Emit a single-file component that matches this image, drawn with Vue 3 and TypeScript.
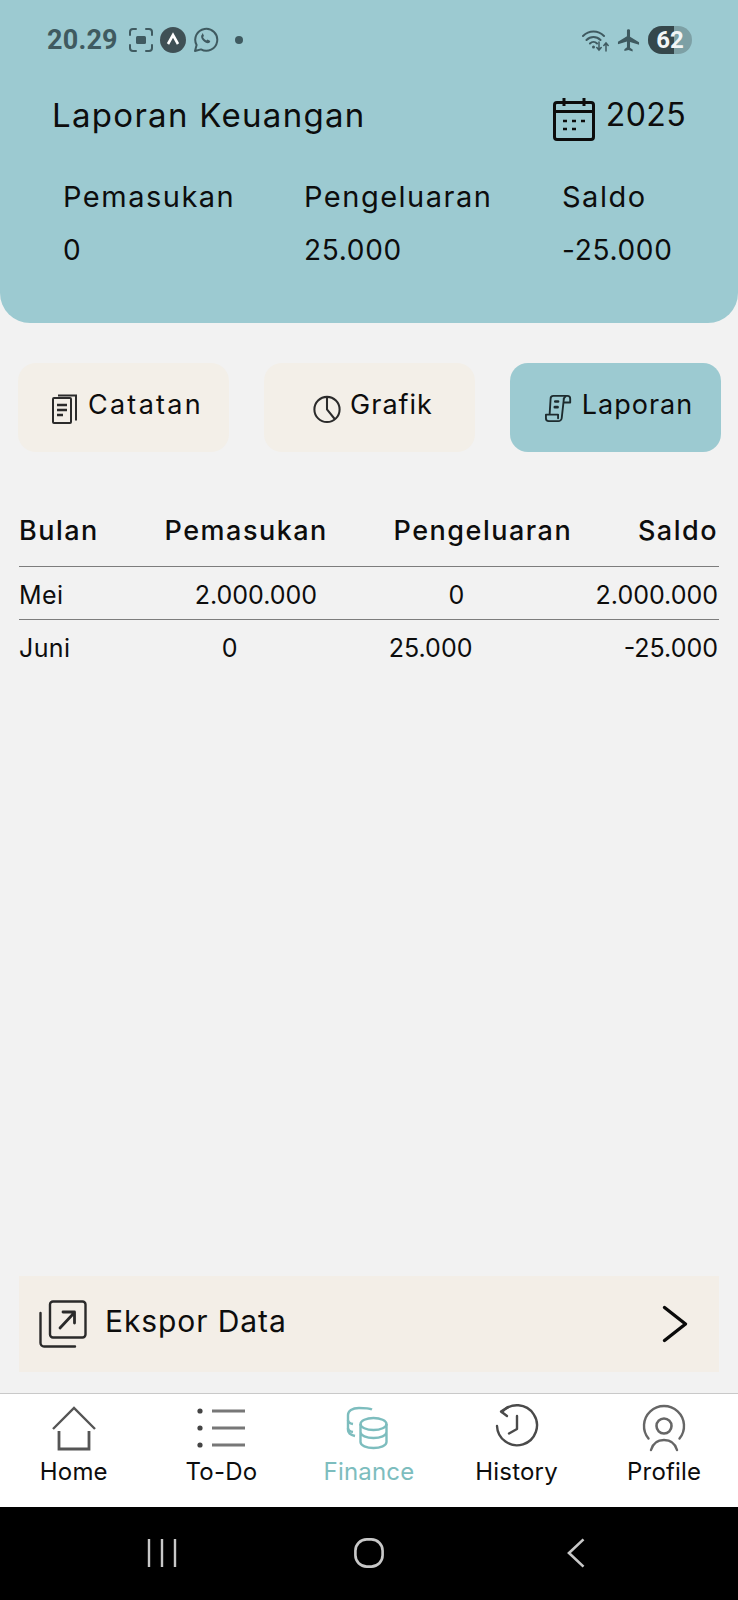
<template>
  <div class="page">
    <header class="hero">
      <div class="status">
        <span class="time">20.29</span>
        <svg class="st-shot" viewBox="0 0 24 24" fill="none" stroke="#3f5a60" stroke-width="2" stroke-linecap="round">
          <path d="M1 7V4a3 3 0 0 1 3-3h3M17 1h3a3 3 0 0 1 3 3v3M23 17v3a3 3 0 0 1-3 3h-3M7 23H4a3 3 0 0 1-3-3v-3" />
          <rect x="7" y="8" width="10" height="8" rx="1.500" fill="#3f5a60" stroke="none" />
        </svg>
        <svg class="st-a" viewBox="0 0 26 26">
          <circle cx="13" cy="13" r="13" fill="#3f5055" />
          <path d="M8 17l5-9 5 9" fill="none" stroke="#fff" stroke-width="2.600" />
        </svg>
        <svg class="st-wa" viewBox="0 0 26 26" fill="none" stroke="#3f5a60" stroke-width="2">
          <path d="M2 24l1.600-6A11 11 0 1 1 8 22.400z" stroke-linejoin="round" />
          <path d="M9 7.500c-1.600 1.400-1 4 1.200 6.300s5 3.200 6.500 1.600l.6-1.400-2.800-1.600-1.200 1c-1.400-.5-2.700-1.800-3.300-3.300l1-1.200-1.300-2.800z" fill="#3f5a60" stroke="none" />
        </svg>
        <span class="st-dot"></span>
        <span class="st-gap"></span>
        <svg class="st-wifi" viewBox="0 0 28 24" fill="none" stroke="#3f5a60" stroke-width="2" stroke-linecap="round">
          <path d="M1 8c6-6 15-6 21 0M4.500 12c4-4 10-4 14 0M8 15.500c2-2 5-2 7 0" />
          <circle cx="11.500" cy="19" r="1.500" fill="#3f5a60" stroke="none" />
          <path d="M17 14v8M14.800 19.500l2.200 2.500 2.200-2.500M24 23v-8M21.800 17.500l2.200-2.500 2.200 2.500" stroke-width="1.500" />
        </svg>
        <svg class="st-plane" viewBox="0 0 24 24">
          <path d="M10.400 1.500c0-1.600 3.200-1.600 3.200 0v6.600l9.400 5.700v2.700l-9.400-3v6l2.700 2v1.900L12 21.900l-4.300 1.100V21l2.700-2v-6l-9.400 3v-2.700l9.400-5.700z" fill="#3f5a60" />
        </svg>
        <div class="battery"><span class="bat-level"></span><span class="bat-num">62</span></div>
      </div>

      <div class="title-row">
        <h1 class="title">Laporan Keuangan</h1>
        <div class="year">
          <svg class="cal" viewBox="0 0 42 44" fill="none" stroke="#0c0c0c" stroke-width="3">
            <rect x="1.500" y="5.500" width="39" height="37" rx="2.500" />
            <path d="M1.500 14.500h39M11 1v8M31 1v8" />
            <path d="M10 24h4M19 24h4M28 24h4M10 32h4M19 32h4" stroke-width="2.500" />
          </svg>
          <span>2025</span>
        </div>
      </div>

      <div class="summary">
        <span class="lbl">Pemasukan</span>
        <span class="lbl">Pengeluaran</span>
        <span class="lbl">Saldo</span>
        <span>0</span>
        <span>25.000</span>
        <span>-25.000</span>
      </div>
    </header>

    <nav class="tabs">
      <button type="button" class="tab wide">
        <svg class="tab-ico" viewBox="0 0 26 30" fill="none" stroke="#2b2b2b" stroke-width="2">
          <rect x="1" y="4" width="18" height="25" rx="1" />
          <path d="M6 1.500h18v25" />
          <path d="M5 11h10M5 16h10M5 21h6" stroke-width="2.400" />
        </svg>
        Catatan
      </button>
      <button type="button" class="tab">
        <svg class="tab-ico" viewBox="0 0 30 30" fill="none" stroke="#2b2b2b" stroke-width="2.200">
          <circle cx="15" cy="15.500" r="13.500" />
          <path d="M15 2v13.500l8.500 10.500" />
        </svg>
        Grafik
      </button>
      <button type="button" class="tab active">
        <svg class="tab-ico" viewBox="0 0 30 30" fill="none" stroke="#1d2b2e" stroke-width="2" stroke-linejoin="round" stroke-linecap="round">
          <path d="M5 20L6 4a3 3 0 0 1 3-3h15a3 3 0 0 1 3 3v4h-6" />
          <path d="M22 1.500c-1.500 1-2 2.500-2 4.500l-2 18a4 4 0 0 1-4 4H4a3 3 0 0 1-3-3v-4h13v4" />
          <path d="M11 7h3M10.500 13h3" stroke-width="2.800" />
        </svg>
        Laporan
      </button>
    </nav>

    <section class="table">
      <div class="row head">
        <span>Bulan</span>
        <span>Pemasukan</span>
        <span>Pengeluaran</span>
        <span>Saldo</span>
      </div>
      <div v-for="r in rows" :key="r[0]" class="row">
        <span v-for="(c, i) in r" :key="i">{{ c }}</span>
      </div>
    </section>

    <div class="spacer"></div>

    <div class="export">
      <svg class="exp-ico" viewBox="0 0 48 48" fill="none" stroke="#2a2a2a" stroke-width="2.400" stroke-linecap="round" stroke-linejoin="round">
        <rect x="11" y="1.500" width="35.500" height="36" rx="3" />
        <path d="M1.500 13v30a3.500 3.500 0 0 0 3.500 3.500h31" />
        <path d="M21 28l14-15M24 12h11.500v11" stroke-width="2.800" />
      </svg>
      <span class="exp-label">Ekspor Data</span>
      <svg class="exp-chev" viewBox="0 0 26 38" fill="none" stroke="#0a0a0a" stroke-width="3.400" stroke-linecap="round" stroke-linejoin="round">
        <path d="M2.500 2.500L23.500 19 2.500 35.500" />
      </svg>
    </div>

    <nav class="bottom">
      <div v-for="n in navItems" :key="n" class="nav-item" :class="{ on: n === 'Finance' }">
        <svg v-if="n === 'Home'" viewBox="0 0 44 44" fill="none" stroke="#555" stroke-width="2.400">
          <path d="M1 23L22 2l21 21" />
          <path d="M7 25v18h30V25" stroke-width="2.800" />
        </svg>
        <svg v-else-if="n === 'To-Do'" viewBox="0 0 50 44" fill="none" stroke="#777" stroke-width="3.200">
          <path d="M16 5h33M16 22h33M16 39h33" />
          <circle cx="4" cy="5" r="2.600" fill="#444" stroke="none" />
          <circle cx="4" cy="22" r="2.600" fill="#444" stroke="none" />
          <circle cx="4" cy="39" r="2.600" fill="#444" stroke="none" />
        </svg>
        <svg v-else-if="n === 'Finance'" viewBox="0 0 44 44" fill="none" stroke="#7dbdbe" stroke-width="2.400">
          <path d="M25 3.500C22 2 18 2 12 2 5 2 1 5 1 9v15c0 3 3 5 7 6" />
          <path d="M1 14c0 2 2 3.500 5 4M1 22c0 2 2 3.500 5 4" />
          <ellipse cx="26.500" cy="18" rx="13" ry="6" />
          <path d="M13.500 18v18c0 3.500 6 6 13 6s13-2.500 13-6V18M13.500 26c0 3.500 6 6 13 6s13-2.500 13-6" />
        </svg>
        <svg v-else-if="n === 'History'" viewBox="0 0 44 44" fill="none" stroke="#4a4a4a" stroke-width="2.400" stroke-linecap="round" stroke-linejoin="round">
          <path d="M7 6A20 20 0 1 1 2 20" />
          <path d="M13 1L6 5.500 12 10" />
          <path d="M22 10v13l-8 4.500" />
        </svg>
        <svg v-else viewBox="0 0 44 44" fill="none" stroke="#666" stroke-width="2.400" stroke-linecap="round">
          <path d="M6.500 32.600A20 20 0 1 1 37.500 32.600" />
          <circle cx="22" cy="20" r="7.500" stroke-width="2.600" />
          <path d="M9 44c2-7 7-10 13-10s11 3 13 10" />
        </svg>
        <span>{{ n }}</span>
      </div>
    </nav>

    <div class="sysbar">
      <svg viewBox="0 0 30 30" fill="none" stroke="#c8c8c8" stroke-width="2.400"><path d="M2 1v28M15 1v28M28 1v28" /></svg>
      <svg viewBox="0 0 32 32" fill="none" stroke="#c8c8c8" stroke-width="2.800"><rect x="1.500" y="1.500" width="29" height="29" rx="12" /></svg>
      <svg viewBox="0 0 20 32" fill="none" stroke="#c8c8c8" stroke-width="2.800"><path d="M18 1.500L2.500 16 18 30.500" /></svg>
    </div>
  </div>
</template>

<script setup lang="ts">
const rows: string[][] = [
  ['Mei', '2.000.000', '0', '2.000.000'],
  ['Juni', '0', '25.000', '-25.000'],
];
const navItems = ['Home', 'To-Do', 'Finance', 'History', 'Profile'];
</script>

<style>
html, body { margin: 0; background: #f2f2f2; }
</style>

<style scoped>
.page {
  width: 738px;
  height: 1600px;
  display: flex;
  flex-direction: column;
  background: #f2f2f2;
  color: #0d0d0d;
  font-family: Inter, "Noto Sans", sans-serif;
  overflow: hidden;
}

.hero {
  height: 323px;
  box-sizing: border-box;
  padding-top: 26px;
  background: #9ccad1;
  border-radius: 0 0 30px 30px;
}

.status {
  height: 28px;
  display: flex;
  align-items: center;
  padding: 0 46px 0 47px;
}
.time {
  font: 700 27px/28px Roboto, sans-serif;
  letter-spacing: 0.2px;
  color: #3f5a60;
  width: 70px;
}
.st-shot { width: 24px; height: 24px; margin-left: 12px; }
.st-a { width: 26px; height: 26px; margin-left: 7px; }
.st-wa { width: 26px; height: 26px; margin-left: 7px; }
.st-dot { width: 8px; height: 8px; border-radius: 50%; background: #3f5a60; margin-left: 16px; }
.st-gap { flex: 1; }
.st-wifi { width: 28px; height: 24px; }
.st-plane { width: 23px; height: 23px; margin-left: 7px; }
.battery {
  position: relative;
  width: 44px;
  height: 28px;
  margin-left: 8px;
  border-radius: 14px;
  overflow: hidden;
  background: #7da0a5;
  text-align: center;
  font: 700 24px/28px Roboto, sans-serif;
  color: #f2f6f6;
}
.bat-level { position: absolute; left: 0; top: 0; bottom: 0; width: 26px; background: #35474b; }
.bat-num { position: relative; }

.title-row {
  height: 44px;
  margin-top: 40px;
  display: flex;
  align-items: center;
  justify-content: space-between;
  padding: 0 52px 0 52px;
}
.title {
  margin: 0;
  padding-bottom: 2px;
  font-size: 33px;
  font-weight: 400;
  letter-spacing: 1.3px;
}
.year {
  display: flex;
  align-items: center;
  gap: 11px;
  font-size: 32px;
  letter-spacing: 0.4px;
}
.year span { padding-bottom: 4px; }
.cal { width: 42px; height: 44px; position: relative; top: 3px; }

.summary {
  margin-top: 39px;
  padding-left: 63px;
  display: grid;
  grid-template-columns: 241px 258px auto;
  grid-auto-rows: 40px;
  row-gap: 13px;
  align-items: center;
  font-size: 28px;
  letter-spacing: 0.7px;
}
.lbl { font-size: 29px; letter-spacing: 1.5px; padding-bottom: 2px; }

.tabs {
  margin-top: 40px;
  height: 89px;
  padding: 0 17px 0 18px;
  display: flex;
  gap: 35px;
}
.tab {
  flex: 1;
  display: flex;
  align-items: center;
  justify-content: center;
  gap: 9px;
  padding: 0 0 6px 7px;
  border: 0;
  border-radius: 18px;
  background: #f3efe8;
  color: #0d0d0d;
  font: inherit;
  font-size: 27px;
  letter-spacing: 1px;
}
.tab.wide { letter-spacing: 2.300px; }
.tab.active { background: #9ccad1; }
.tab-ico { width: 28px; height: 30px; margin-top: 8px; }

.table {
  margin-top: 60px;
  padding: 0 19px;
}
.row {
  display: flex;
  justify-content: space-between;
  align-items: center;
  height: 53px;
  box-sizing: border-box;
  padding: 4px 1px 0 0;
  border-top: 1px solid #7d7d7d;
  font-size: 25px;
}
.row span:first-child { letter-spacing: 0.4px; }
.row.head {
  height: 54px;
  padding: 0 1px 18px 0;
  border-top: 0;
  font-weight: 500;
  font-size: 27px;
  letter-spacing: 1.500px;
}
.row.head span:first-child { letter-spacing: 1.500px; }
.spacer { flex: 1; }

.export {
  height: 96px;
  margin: 0 19px 21px 19px;
  padding: 0 31px 0 20px;
  display: flex;
  align-items: center;
  background: #f3eee7;
}
.exp-ico { width: 48px; height: 48px; }
.exp-label { margin-left: 18px; font-size: 30px; letter-spacing: 0.9px; padding-bottom: 6px; }
.exp-chev { width: 26px; height: 38px; margin-left: auto; }

.bottom {
  height: 114px;
  display: flex;
  background: #fff;
  border-top: 1px solid #c9c9c9;
  box-sizing: border-box;
}
.nav-item {
  flex: 1;
  display: flex;
  flex-direction: column;
  align-items: center;
  padding-top: 12px;
  font-size: 24px;
  letter-spacing: 0.2px;
}
.nav-item svg { height: 44px; width: auto; overflow: visible; }
.nav-item span { line-height: 30px; margin-top: 7px; }
.nav-item.on { color: #7dbdbe; }

.sysbar {
  height: 93px;
  padding: 0 59px;
  display: grid;
  grid-template-columns: repeat(3, 1fr);
  justify-items: center;
  align-items: center;
  background: #000;
}
.sysbar svg { height: 30px; width: 30px; margin-top: -1px; }
</style>
